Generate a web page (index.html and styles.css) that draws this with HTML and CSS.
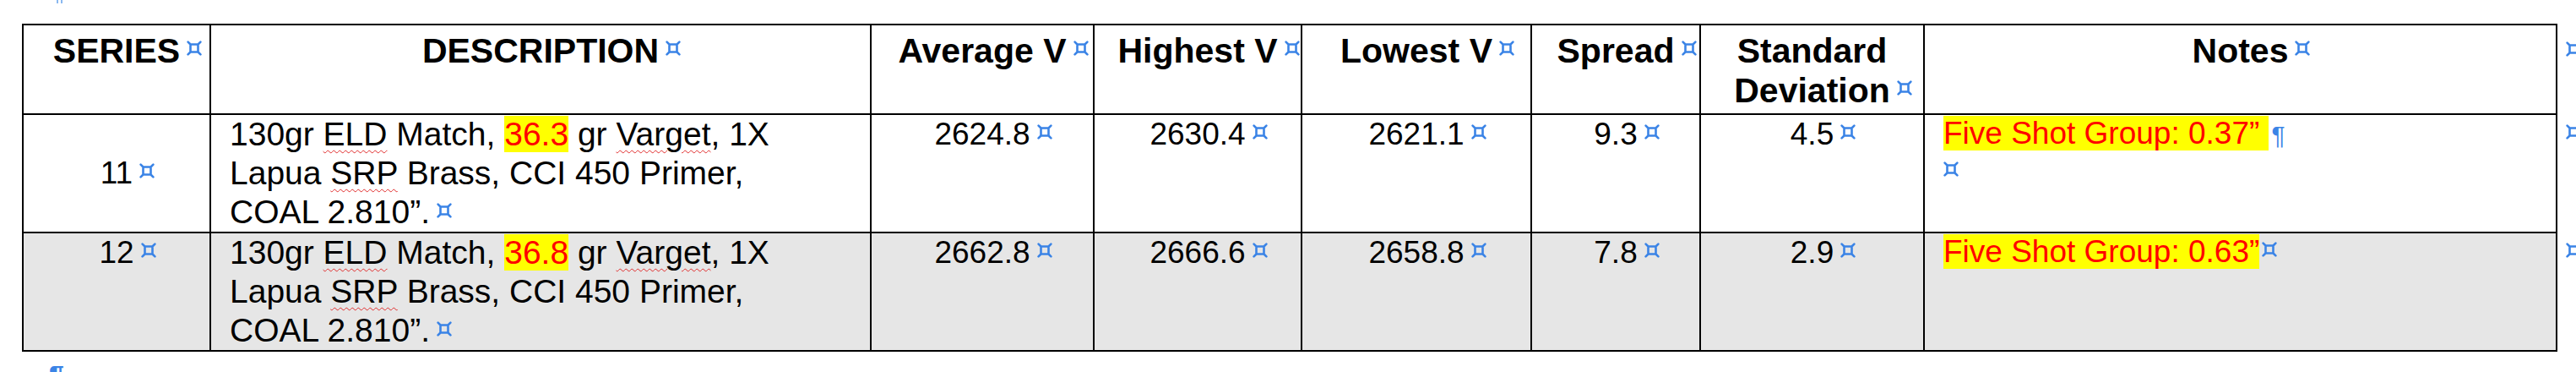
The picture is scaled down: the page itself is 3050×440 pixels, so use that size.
FILE: index.html
```html
<!DOCTYPE html>
<html lang="en">
<head>
<meta charset="utf-8">
<title>Load development log</title>
<link rel="stylesheet" href="styles.css">
</head>
<body>
<svg class="defs" width="0" height="0" aria-hidden="true">
  <symbol id="cellmark" viewBox="0 0 18 18">
    <path d="M4.5 4.5H13.5V13.5H4.5Z M1.6 1.6L4.5 4.5 M16.4 1.6L13.5 4.5 M1.6 16.4L4.5 13.5 M16.4 16.4L13.5 13.5" fill="none" stroke="#3b84e6" stroke-width="2.6" stroke-linecap="round" stroke-linejoin="round"/>
  </symbol>
</svg>
<div class="page">
  <div class="topmark"><svg width="8" height="4" viewBox="0 0 8 4"><rect x="0" y="0" width="2" height="4" fill="#8ab8f0"/><rect x="5" y="0" width="2" height="4" fill="#8ab8f0"/></svg></div>
  <table class="log">
    <colgroup>
      <col class="c-series"><col class="c-desc"><col class="c-avg"><col class="c-high"><col class="c-low"><col class="c-spread"><col class="c-std"><col class="c-notes"><col class="c-end">
    </colgroup>
    <thead>
      <tr>
        <th>SERIES<svg class="cm"><use href="#cellmark"/></svg></th>
        <th>DESCRIPTION<svg class="cm"><use href="#cellmark"/></svg></th>
        <th>Average V<svg class="cm"><use href="#cellmark"/></svg></th>
        <th>Highest V<svg class="cm"><use href="#cellmark"/></svg></th>
        <th>Lowest V<svg class="cm"><use href="#cellmark"/></svg></th>
        <th>Spread<svg class="cm"><use href="#cellmark"/></svg></th>
        <th>Standard Deviation<svg class="cm"><use href="#cellmark"/></svg></th>
        <th>Notes<svg class="cm"><use href="#cellmark"/></svg></th>
        <td class="rowend head"><svg class="cm"><use href="#cellmark"/></svg></td>
      </tr>
    </thead>
    <tbody>
      <tr>
        <td class="mid">11<svg class="cm"><use href="#cellmark"/></svg></td>
        <td class="desc">130gr <span class="err">ELD</span> Match, <span class="hl">36.3</span> gr <span class="err">Varget</span>, 1X Lapua <span class="err">SRP</span> Brass, CCI 450 Primer, COAL 2.810”.<svg class="cm"><use href="#cellmark"/></svg></td>
        <td>2624.8<svg class="cm"><use href="#cellmark"/></svg></td>
        <td>2630.4<svg class="cm"><use href="#cellmark"/></svg></td>
        <td>2621.1<svg class="cm"><use href="#cellmark"/></svg></td>
        <td>9.3<svg class="cm"><use href="#cellmark"/></svg></td>
        <td>4.5<svg class="cm"><use href="#cellmark"/></svg></td>
        <td class="notes">
          <div><span class="hl">Five Shot Group: 0.37” </span><span class="pil">¶</span></div>
          <div><svg class="cm"><use href="#cellmark"/></svg></div>
        </td>
        <td class="rowend"><svg class="cm"><use href="#cellmark"/></svg></td>
      </tr>
      <tr class="shaded">
        <td>12<svg class="cm"><use href="#cellmark"/></svg></td>
        <td class="desc">130gr <span class="err">ELD</span> Match, <span class="hl">36.8</span> gr <span class="err">Varget</span>, 1X Lapua <span class="err">SRP</span> Brass, CCI 450 Primer, COAL 2.810”.<svg class="cm"><use href="#cellmark"/></svg></td>
        <td>2662.8<svg class="cm"><use href="#cellmark"/></svg></td>
        <td>2666.6<svg class="cm"><use href="#cellmark"/></svg></td>
        <td>2658.8<svg class="cm"><use href="#cellmark"/></svg></td>
        <td>7.8<svg class="cm"><use href="#cellmark"/></svg></td>
        <td>2.9<svg class="cm"><use href="#cellmark"/></svg></td>
        <td class="notes"><span class="hl">Five Shot Group: 0.63”</span><svg class="cm tight"><use href="#cellmark"/></svg></td>
        <td class="rowend"><svg class="cm"><use href="#cellmark"/></svg></td>
      </tr>
    </tbody>
  </table>
  <div class="para">¶</div>
</div>
</body>
</html>
```

FILE: styles.css
```css
html, body {
  margin: 0;
  padding: 0;
  background: #ffffff;
}

body {
  width: 3050px;
  height: 440px;
  overflow: hidden;
  font-family: "Liberation Sans", Arial, Helvetica, sans-serif;
  color: #000000;
}

.defs {
  display: block;
  width: 0;
  height: 0;
  overflow: hidden;
}

.page {
  padding-left: 26px;
}

.topmark {
  height: 4px;
  margin-left: 41px;
  line-height: 0;
}

.topmark svg {
  display: block;
}

.log {
  margin-top: 24px;
  border-collapse: collapse;
  table-layout: fixed;
  width: 3024px;
}

.c-series { width: 222px; }
.c-desc { width: 782px; }
.c-avg { width: 264px; }
.c-high { width: 246px; }
.c-low { width: 272px; }
.c-spread { width: 200px; }
.c-std { width: 265px; }
.c-notes { width: 749px; }
.c-end { width: 24px; }

.log th,
.log td {
  border: 2px solid #000000;
  vertical-align: top;
  text-align: center;
}

.log th {
  font-size: 41px;
  font-weight: bold;
  line-height: 47px;
  padding: 7px 22px 3px;
}

.log td {
  font-size: 37px;
  line-height: 46px;
  padding: 0 22px;
}

.log td.mid {
  vertical-align: middle;
}

.log td.desc {
  font-size: 39px;
  text-align: left;
  padding-right: 40px;
}

.log td.notes {
  text-align: left;
  line-height: 43px;
}

.shaded td {
  background: #e6e6e6;
}

.log td.rowend,
.shaded td.rowend {
  border: none;
  background: transparent;
  padding: 0 0 0 10px;
  text-align: left;
  white-space: nowrap;
  font-size: 39px;
}

.log td.rowend.head {
  font-size: 41px;
  line-height: 47px;
  padding-top: 7px;
}

.cm {
  display: inline-block;
  width: 18px;
  height: 18px;
  margin-left: 8px;
  margin-right: -26px;
  vertical-align: 6px;
}

.log th .cm {
  vertical-align: 8px;
}

.notes div .cm {
  margin-left: 0;
}

.cm.tight {
  margin-left: 3px;
  margin-right: -21px;
}

.rowend .cm {
  margin-left: 0;
  margin-right: 0;
}

.hl {
  background: #ffff00;
  color: #ff0000;
}

.err {
  text-decoration: underline wavy #e02b2b;
  text-decoration-thickness: 1px;
  text-underline-offset: 5px;
}

.pil {
  color: #3b84e6;
  font-size: 30px;
  margin-left: 4px;
}

.para {
  margin-left: 32px;
  margin-top: 12px;
  font-size: 32px;
  line-height: 32px;
  font-weight: bold;
  color: #3b84e6;
}
```
